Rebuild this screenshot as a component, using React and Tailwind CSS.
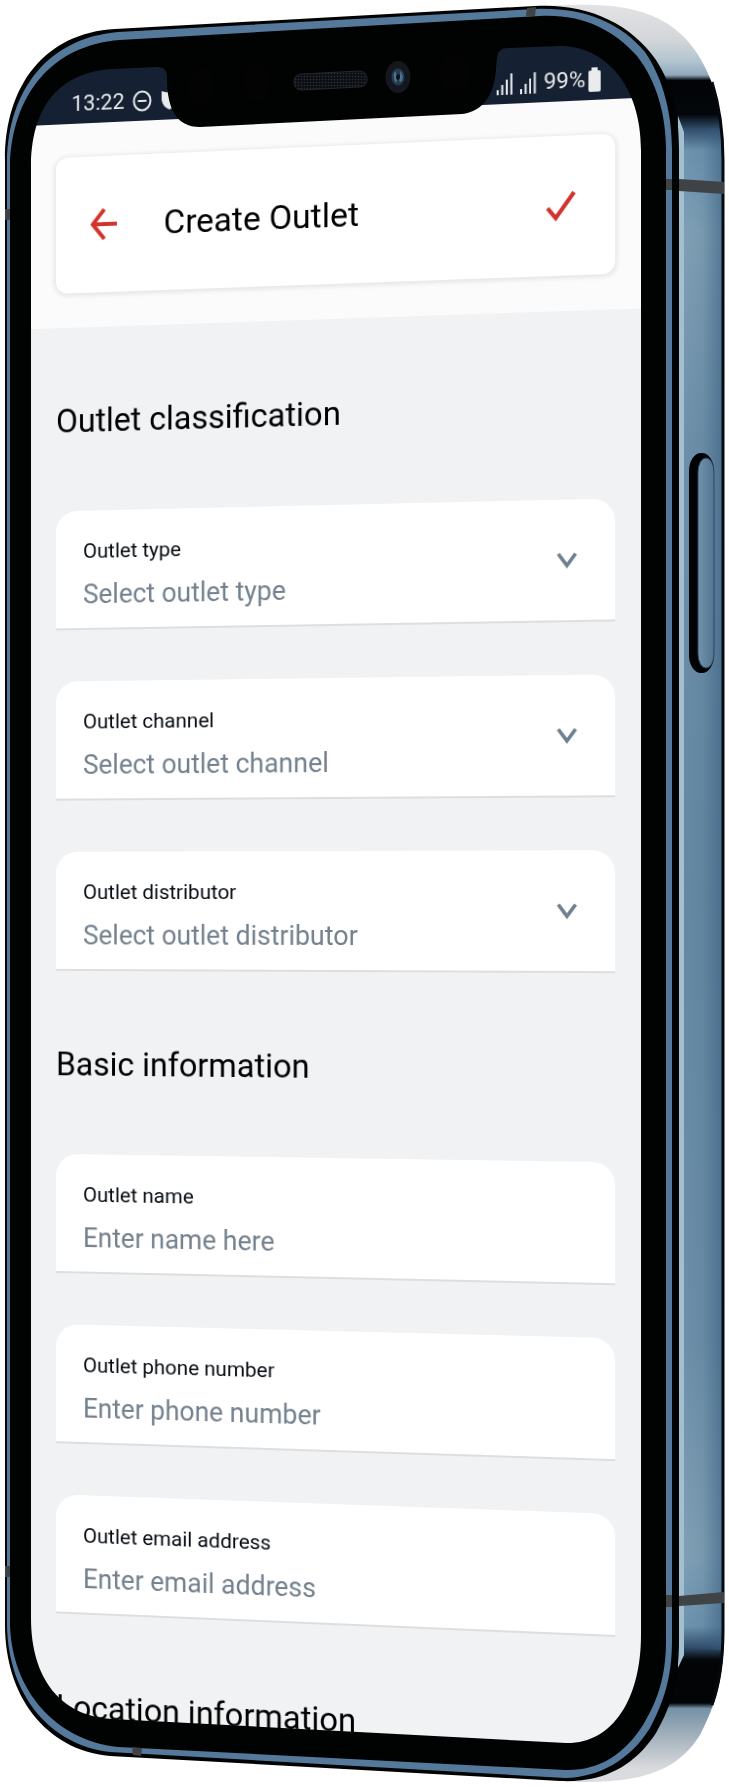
import { useState } from "react";

const SCREEN_HOLE =
  "M31 165C32 100 65 72 112 69L157 67C164 67 167 70 167 78C167 108 176 127 200 127L462 114C482 112 495 95 496 68L497 58C498 51 501 48 508 48L560 46C605 46 641 85 641 150V1635C641 1700 612 1744 566 1743L112 1719C60 1716 31 1678 31 1618Z";
const FRONT_FACE =
  "M5 160C5 85 45 33 115 29L535 6C585 3 630 22 656 60C672 85 679 110 679 150V1640C679 1680 672 1705 656 1733C635 1765 605 1783 560 1781L110 1756C45 1750 5 1695 5 1625Z";
const RING_OUTER =
  "M7 162C8 90 48 38 118 32L535 9C580 7 618 20 645 52C664 80 672 115 672 150V1640C672 1675 665 1700 650 1728C630 1760 600 1777 565 1778L110 1752C50 1745 8 1695 7 1625Z";
const RING_INNER =
  "M10 165C12 95 52 45 120 40L540 16C580 14 612 28 637 56C657 82 666 115 666 150V1640C666 1672 660 1697 643 1725C624 1755 598 1771 565 1770L118 1747C55 1740 12 1690 10 1625Z";

const classification = [
  { id: "type", label: "Outlet type", placeholder: "Select outlet type" },
  { id: "channel", label: "Outlet channel", placeholder: "Select outlet channel" },
  { id: "distributor", label: "Outlet distributor", placeholder: "Select outlet distributor" },
];

const basics = [
  { id: "name", label: "Outlet name", placeholder: "Enter name here", type: "text" },
  { id: "phone", label: "Outlet phone number", placeholder: "Enter phone number", type: "tel" },
  { id: "email", label: "Outlet email address", placeholder: "Enter email address", type: "email" },
];

function Signal() {
  return (
    <svg viewBox="0 0 16 22" className="h-[22px] w-4" stroke="#e9ebed" strokeWidth="2" aria-hidden="true">
      <path d="M1 17v5M5.500 12v10M10 7v15M14.500 1v21" />
    </svg>
  );
}

function StatusBar() {
  return (
    <div className="flex h-[62px] items-end justify-between bg-[#152132] pr-[43px] pl-[45px] pb-2 text-[22px] leading-6 text-[#e9ebed]">
      <div className="flex items-center gap-2">
        <span>13:22</span>
        <svg viewBox="0 0 20 22" className="h-[22px] w-5" fill="none" stroke="#e9ebed" strokeWidth="2" aria-hidden="true">
          <ellipse cx="10" cy="11" rx="8.500" ry="9.500" />
          <path d="M5.500 11h9" />
        </svg>
        <svg viewBox="0 0 20 22" className="h-[22px] w-5" fill="#e9ebed" aria-hidden="true">
          <path d="M2 2q8 3 16 0v9q-1 7-8 10q-7-3-8-10z" />
        </svg>
      </div>
      <div className="flex items-center gap-[7px]">
        <Signal />
        <Signal />
        <span>99%</span>
        <svg viewBox="0 0 12 24" className="-ml-1 h-6 w-3" fill="#e9ebed" aria-hidden="true">
          <path d="M3 0h6v3h1.500q1.500 0 1.500 2v17q0 2-1.500 2h-9q-1.500 0-1.500-2v-17q0-2 1.500-2h1.500z" />
        </svg>
      </div>
    </div>
  );
}

function Header() {
  return (
    <header className="bg-[#fbfbfc] px-[29px] pt-[34px] pb-[35px]">
      <div className="flex h-[138px] items-center rounded-xl bg-white pr-[38px] pl-[35px] shadow-[0_1px_4px_2px_rgba(20,30,50,0.09)]">
        <button type="button" aria-label="Back">
          <svg viewBox="0 0 28 34" className="h-[34px] w-7" fill="none" stroke="#d2342d" strokeWidth="4" aria-hidden="true">
            <path d="M28 17H3M15 2L3 17l12 15" />
          </svg>
        </button>
        <h1 className="ml-12 flex-1 text-[34px] leading-10 text-black">Create Outlet</h1>
        <button type="button" aria-label="Save">
          <svg viewBox="0 0 30 30" className="h-[30px] w-[30px]" fill="none" stroke="#d2342d" strokeWidth="4" aria-hidden="true">
            <path d="M2 17l8 10L28 2" />
          </svg>
        </button>
      </div>
    </header>
  );
}

function SectionTitle({ children }) {
  return <h2 className="pt-[76px] text-[33px] leading-[38px] text-black">{children}</h2>;
}

function FieldCard({ id, label, children }) {
  return (
    <div className="relative h-[121px] rounded-t-[22px] border-b-2 border-[#dcdee0] bg-white px-7 pt-7">
      <label htmlFor={id} className="block text-[21px] leading-[26px] text-[#060b12]">
        {label}
      </label>
      {children}
    </div>
  );
}

function SelectField({ id, label, placeholder }) {
  return (
    <FieldCard id={id} label={label}>
      <select
        id={id}
        defaultValue=""
        className="mt-[13px] block h-9 w-full appearance-none bg-transparent text-[27px] leading-9 text-[#73808d] outline-none"
      >
        <option value="">{placeholder}</option>
      </select>
      <svg
        viewBox="0 0 20 16"
        className="pointer-events-none absolute top-[52px] right-[37px] h-4 w-5"
        fill="none"
        stroke="#6f7f8d"
        strokeWidth="3.500"
        aria-hidden="true"
      >
        <path d="M1.500 1.500L10 13l8.500-11.500" />
      </svg>
    </FieldCard>
  );
}

function TextField({ id, label, placeholder, type }) {
  const [value, setValue] = useState("");
  return (
    <FieldCard id={id} label={label}>
      <input
        id={id}
        type={type}
        value={value}
        onChange={(e) => setValue(e.target.value)}
        placeholder={placeholder}
        className="mt-[13px] block h-9 w-full bg-transparent text-[27px] leading-9 text-[#060b12] outline-none placeholder:text-[#73808d]"
      />
    </FieldCard>
  );
}

function PhoneFrame() {
  return (
    <svg
      viewBox="0 0 729 1787"
      preserveAspectRatio="none"
      className="pointer-events-none absolute inset-0 h-full w-full"
      aria-hidden="true"
    >
      <defs>
        <linearGradient id="side" gradientUnits="userSpaceOnUse" x1="0" y1="0" x2="0" y2="1787">
          <stop offset="0.003" stopColor="#e2e2e4" />
          <stop offset="0.022" stopColor="#d3d6d9" />
          <stop offset="0.034" stopColor="#b3c5d1" />
          <stop offset="0.042" stopColor="#8fa9bb" />
          <stop offset="0.045" stopColor="#020406" />
          <stop offset="0.064" stopColor="#03070b" />
          <stop offset="0.072" stopColor="#2f4c69" />
          <stop offset="0.084" stopColor="#6d93af" />
          <stop offset="0.13" stopColor="#80a0b5" />
          <stop offset="0.25" stopColor="#6e90a9" />
          <stop offset="0.5" stopColor="#6689a3" />
          <stop offset="0.75" stopColor="#6d8fa8" />
          <stop offset="0.87" stopColor="#80a0b5" />
          <stop offset="0.91" stopColor="#6d93af" />
          <stop offset="0.922" stopColor="#2f4c69" />
          <stop offset="0.929" stopColor="#020406" />
          <stop offset="0.953" stopColor="#020406" />
          <stop offset="0.956" stopColor="#7590a5" />
          <stop offset="0.972" stopColor="#a5b2bd" />
          <stop offset="0.99" stopColor="#dadbde" />
        </linearGradient>
        <linearGradient id="shade" x1="0" x2="1">
          <stop offset="0" stopColor="#33587a" stopOpacity="0" />
          <stop offset="0.5" stopColor="#33587a" stopOpacity="0.1" />
          <stop offset="1" stopColor="#33587a" stopOpacity="0.55" />
        </linearGradient>
        <linearGradient id="key" x1="0" x2="1">
          <stop offset="0" stopColor="#7392ab" />
          <stop offset="0.5" stopColor="#62849f" />
          <stop offset="1" stopColor="#537593" />
        </linearGradient>
        <pattern id="mesh" width="3" height="3" patternUnits="userSpaceOnUse">
          <rect width="3" height="3" fill="#0c1015" />
          <circle cx="1.500" cy="1.500" r="0.800" fill="#2a3036" />
        </pattern>
      </defs>

      {/* metal side */}
      <path
        d="M540 6C600 3 650 2 685 38C710 65 724 105 724 160V1630C724 1680 715 1705 700 1735C675 1775 635 1783 570 1782C630 1776 674 1710 674 1640V150C674 80 630 12 540 6Z"
        fill="url(#side)"
      />
      <rect x="683" y="128" width="39" height="1522" fill="url(#shade)" />
      <path d="M712 82C720 108 723 135 723 160V1630C723 1660 719 1685 712 1705" fill="none" stroke="#04090f" strokeWidth="3" />
      <path d="M678 116L684 132V1655L678 1668Z" fill="#a3c0d3" />

      {/* front glass */}
      <path d={FRONT_FACE + SCREEN_HOLE} fillRule="evenodd" fill="#010202" />
      <path d={RING_OUTER + RING_INNER} fillRule="evenodd" fill="#54799a" />

      {/* antenna lines */}
      <g fill="#3f4346">
        <path d="M679 179L724 182V194L679 191Z" />
        <path d="M666 179H672V190H666Z" />
        <path d="M679 1596L724 1592V1603L679 1606Z" />
        <path d="M666 1595H672V1607H666Z" />
        <path d="M5 209H10V220H5ZM5 1566H10V1577H5Z" />
        <path d="M527 8L536 7L535 16H526Z" />
        <path d="M132 1747L142 1748L141 1756L133 1755Z" />
      </g>

      {/* power key */}
      <rect x="689" y="453" width="25" height="220" rx="12" ry="18" fill="#010305" />
      <rect x="698" y="458" width="16" height="210" rx="8" ry="14" fill="url(#key)" stroke="#2b4861" strokeWidth="1" />

      {/* speaker and camera */}
      <path
        d="M302 74L359 71C364 71 367 74 367 79C367 84 364 87 359 87L302 90C297 90 294 87 294 82C294 77 297 74 302 74Z"
        fill="url(#mesh)"
        stroke="#24282c"
      />
      <g fill="#030303">
        <ellipse cx="201" cy="86" rx="14" ry="19" />
        <ellipse cx="257" cy="83" rx="14" ry="19" />
        <ellipse cx="455" cy="72" rx="16" ry="19" />
      </g>
      <ellipse cx="398" cy="77" rx="12.500" ry="16" fill="#14181e" />
      <ellipse cx="398" cy="77" rx="6.500" ry="8.500" fill="#263b50" />
      <path d="M395 71Q392 77 396 83Q398 78 397 75ZM400 71Q404 75 402 81Q400 83 399 80Q401 75 400 71Z" fill="#4f7390" />
      <ellipse cx="398" cy="77" rx="2" ry="3" fill="#0c151e" />
    </svg>
  );
}

export default function App() {
  return (
    <div className="relative overflow-hidden bg-white pt-[50px] pr-[88px] pb-[35px] pl-[21px] font-['Roboto','Liberation_Sans',sans-serif]">
      <div className="perspective-[1800px]">
        <main className="-rotate-y-6 overflow-hidden rounded-[72px] bg-[#f1f2f4]">
          <StatusBar />
          <Header />
          <form className="px-[29px] pb-[13px]" onSubmit={(e) => e.preventDefault()}>
            <SectionTitle>Outlet classification</SectionTitle>
            <div className="flex flex-col gap-[52px] pt-[72px]">
              {classification.map((f) => (
                <SelectField key={f.id} {...f} />
              ))}
            </div>
            <SectionTitle>Basic information</SectionTitle>
            <div className="flex flex-col gap-[52px] pt-[72px]">
              {basics.map((f) => (
                <TextField key={f.id} {...f} />
              ))}
            </div>
            <SectionTitle>Location information</SectionTitle>
          </form>
        </main>
      </div>
      <PhoneFrame />
    </div>
  );
}
